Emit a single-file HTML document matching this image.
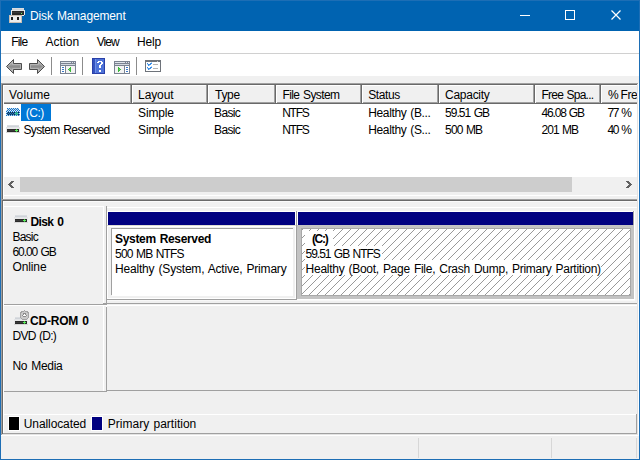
<!DOCTYPE html>
<html><head><meta charset="utf-8">
<style>
*{margin:0;padding:0;box-sizing:border-box}
html,body{width:640px;height:460px;overflow:hidden;background:#f0f0f0}
body{position:relative;font-family:"Liberation Sans",sans-serif;font-size:12px;color:#000}
.a{position:absolute}
.t{position:absolute;line-height:12px;white-space:nowrap;word-spacing:1px}
.b{font-weight:bold}
</style></head><body>
<div class="a" style="left:0px;top:0px;width:640px;height:460px;background:#1d6eb5;"></div>
<div class="a" style="left:1px;top:1px;width:638px;height:30px;background:#0063b1;"></div>
<div class="a" style="left:1px;top:31px;width:638px;height:428px;background:#f0f0f0;"></div>
<div id="x0" class="t" style="left:30.0px;top:10px;letter-spacing:-0.142px;color:#fff">Disk Management</div>
<svg class="a" style="left:9px;top:8px" width="16" height="15" shape-rendering="crispEdges"><rect x="3" y="0" width="12" height="1" fill="#dadde1"/><rect x="3" y="1" width="12" height="1" fill="#cfd3d8"/><rect x="2" y="2" width="14" height="1" fill="#e2e4e7"/><rect x="2" y="3" width="1" height="1" fill="#e9e9e9"/><rect x="3" y="3" width="12" height="1" fill="#2a2a2a"/><rect x="15" y="3" width="1" height="1" fill="#e9e9e9"/><rect x="2" y="4" width="1" height="1" fill="#e9e9e9"/><rect x="3" y="4" width="11" height="1" fill="#3a3a3a"/><rect x="14" y="4" width="1" height="1" fill="#2a2a2a"/><rect x="15" y="4" width="1" height="1" fill="#e9e9e9"/><rect x="2" y="5" width="1" height="1" fill="#e9e9e9"/><rect x="3" y="5" width="9" height="1" fill="#2a2a2a"/><rect x="12" y="5" width="1" height="1" fill="#5ff05f"/><rect x="13" y="5" width="2" height="1" fill="#2a2a2a"/><rect x="15" y="5" width="1" height="1" fill="#e9e9e9"/><rect x="2" y="6" width="1" height="1" fill="#e9e9e9"/><rect x="3" y="6" width="12" height="1" fill="#2a2a2a"/><rect x="15" y="6" width="1" height="1" fill="#e9e9e9"/><rect x="0" y="7" width="13" height="1" fill="#c8beb4"/><rect x="13" y="7" width="2" height="1" fill="#e9e9e9"/><rect x="0" y="8" width="1" height="1" fill="#c8beb4"/><rect x="1" y="8" width="11" height="1" fill="#ececec"/><rect x="12" y="8" width="1" height="1" fill="#c8beb4"/><rect x="0" y="9" width="1" height="1" fill="#c8beb4"/><rect x="1" y="9" width="1" height="1" fill="#ececec"/><rect x="2" y="9" width="2" height="1" fill="#1e1e1e"/><rect x="4" y="9" width="4" height="1" fill="#ececec"/><rect x="8" y="9" width="2" height="1" fill="#1e1e1e"/><rect x="10" y="9" width="2" height="1" fill="#ececec"/><rect x="12" y="9" width="1" height="1" fill="#c8beb4"/><rect x="0" y="10" width="1" height="1" fill="#c8beb4"/><rect x="1" y="10" width="1" height="1" fill="#ececec"/><rect x="2" y="10" width="2" height="1" fill="#1e1e1e"/><rect x="4" y="10" width="4" height="1" fill="#ececec"/><rect x="8" y="10" width="2" height="1" fill="#1e1e1e"/><rect x="10" y="10" width="2" height="1" fill="#ececec"/><rect x="12" y="10" width="1" height="1" fill="#c8beb4"/><rect x="0" y="11" width="1" height="1" fill="#c8beb4"/><rect x="1" y="11" width="1" height="1" fill="#ececec"/><rect x="2" y="11" width="2" height="1" fill="#1e1e1e"/><rect x="4" y="11" width="4" height="1" fill="#ececec"/><rect x="8" y="11" width="2" height="1" fill="#1e1e1e"/><rect x="10" y="11" width="2" height="1" fill="#ececec"/><rect x="12" y="11" width="1" height="1" fill="#c8beb4"/><rect x="0" y="12" width="1" height="1" fill="#c8beb4"/><rect x="1" y="12" width="11" height="1" fill="#ececec"/><rect x="12" y="12" width="1" height="1" fill="#c8beb4"/><rect x="0" y="13" width="1" height="1" fill="#c8beb4"/><rect x="1" y="13" width="11" height="1" fill="#ececec"/><rect x="12" y="13" width="1" height="1" fill="#c8beb4"/><rect x="0" y="14" width="13" height="1" fill="#c8beb4"/></svg>
<div class="a" style="left:520px;top:15px;width:10px;height:1px;background:#fff;"></div>
<div class="a" style="left:565px;top:10px;width:10px;height:10px;border:1px solid #fff"></div>
<svg class="a" style="left:611px;top:10px" width="10" height="10"><path d="M0.5 0.5L9.5 9.5M9.5 0.5L0.5 9.5" stroke="#fff" stroke-width="1.2"/></svg>
<div class="a" style="left:1px;top:31px;width:638px;height:22px;background:#fff;"></div>
<div id="x1" class="t" style="left:11.2px;top:36px;letter-spacing:-0.800px;">File</div>
<div id="x2" class="t" style="left:45.400000000000006px;top:36px;letter-spacing:0.080px;">Action</div>
<div id="x3" class="t" style="left:96.69999999999999px;top:36px;letter-spacing:-0.934px;">View</div>
<div id="x4" class="t" style="left:137.10000000000002px;top:36px;letter-spacing:-0.199px;">Help</div>
<div class="a" style="left:1px;top:53px;width:638px;height:1px;background:#d0d0d0;"></div>
<div class="a" style="left:1px;top:54px;width:638px;height:22px;background:#fff;"></div>
<svg class="a" style="left:4px;top:56px" width="44" height="20" viewBox="0 0 44 20">
<defs><linearGradient id="ga" x1="0" y1="0" x2="0" y2="1"><stop offset="0" stop-color="#c4c4c4"/><stop offset="0.5" stop-color="#8e8e8e"/><stop offset="1" stop-color="#b4b4b4"/></linearGradient></defs>
<path d="M2.5 10.5L9.5 3.5v4h8v6h-8v4z" fill="url(#ga)" stroke="#4e4e4e" stroke-width="1"/>
<path d="M4 10.5L8.5 6v2.5h8v4h-8V15z" fill="none" stroke="#c8c8c8" stroke-width="0.8" opacity="0.7"/>
<path d="M40.5 10.5L33.5 3.5v4h-8v6h8v4z" fill="url(#ga)" stroke="#4e4e4e" stroke-width="1"/>
<path d="M39 10.5L34.5 6v2.5h-8v4h8V15z" fill="none" stroke="#c8c8c8" stroke-width="0.8" opacity="0.7"/>
</svg>
<div class="a" style="left:51px;top:57px;width:1px;height:18px;background:#8c8c8c;"></div>
<div class="a" style="left:82px;top:57px;width:1px;height:18px;background:#8c8c8c;"></div>
<div class="a" style="left:136px;top:57px;width:1px;height:18px;background:#8c8c8c;"></div>
<svg class="a" style="left:60px;top:61px" width="16" height="13" shape-rendering="crispEdges"><rect x="0" y="0" width="16" height="1" fill="#7b8391"/><rect x="0" y="1" width="1" height="1" fill="#7b8391"/><rect x="1" y="1" width="10" height="1" fill="#dfe3ea"/><rect x="11" y="1" width="1" height="1" fill="#7b8391"/><rect x="12" y="1" width="1" height="1" fill="#dfe3ea"/><rect x="13" y="1" width="1" height="1" fill="#7b8391"/><rect x="14" y="1" width="1" height="1" fill="#dfe3ea"/><rect x="15" y="1" width="1" height="1" fill="#7b8391"/><rect x="0" y="2" width="16" height="1" fill="#7b8391"/><rect x="0" y="3" width="1" height="1" fill="#7b8391"/><rect x="1" y="3" width="14" height="1" fill="#d3d8e0"/><rect x="15" y="3" width="1" height="1" fill="#7b8391"/><rect x="0" y="4" width="16" height="1" fill="#7b8391"/><rect x="0" y="5" width="1" height="1" fill="#7b8391"/><rect x="1" y="5" width="4" height="1" fill="#ffffff"/><rect x="5" y="5" width="1" height="1" fill="#7b8391"/><rect x="6" y="5" width="9" height="1" fill="#f3f3f3"/><rect x="15" y="5" width="1" height="1" fill="#7b8391"/><rect x="0" y="6" width="1" height="1" fill="#7b8391"/><rect x="1" y="6" width="1" height="1" fill="#ffffff"/><rect x="2" y="6" width="2" height="1" fill="#3a78c8"/><rect x="4" y="6" width="1" height="1" fill="#ffffff"/><rect x="5" y="6" width="1" height="1" fill="#7b8391"/><rect x="6" y="6" width="4" height="1" fill="#f3f3f3"/><rect x="10" y="6" width="1" height="1" fill="#3cb93c"/><rect x="11" y="6" width="4" height="1" fill="#f3f3f3"/><rect x="15" y="6" width="1" height="1" fill="#7b8391"/><rect x="0" y="7" width="1" height="1" fill="#7b8391"/><rect x="1" y="7" width="4" height="1" fill="#ffffff"/><rect x="5" y="7" width="1" height="1" fill="#7b8391"/><rect x="6" y="7" width="3" height="1" fill="#f3f3f3"/><rect x="9" y="7" width="2" height="1" fill="#3cb93c"/><rect x="11" y="7" width="4" height="1" fill="#f3f3f3"/><rect x="15" y="7" width="1" height="1" fill="#7b8391"/><rect x="0" y="8" width="1" height="1" fill="#7b8391"/><rect x="1" y="8" width="1" height="1" fill="#ffffff"/><rect x="2" y="8" width="2" height="1" fill="#3a78c8"/><rect x="4" y="8" width="1" height="1" fill="#ffffff"/><rect x="5" y="8" width="1" height="1" fill="#7b8391"/><rect x="6" y="8" width="2" height="1" fill="#f3f3f3"/><rect x="8" y="8" width="1" height="1" fill="#3cb93c"/><rect x="9" y="8" width="1" height="1" fill="#66dd66"/><rect x="10" y="8" width="1" height="1" fill="#3cb93c"/><rect x="11" y="8" width="4" height="1" fill="#f3f3f3"/><rect x="15" y="8" width="1" height="1" fill="#7b8391"/><rect x="0" y="9" width="1" height="1" fill="#7b8391"/><rect x="1" y="9" width="4" height="1" fill="#ffffff"/><rect x="5" y="9" width="1" height="1" fill="#7b8391"/><rect x="6" y="9" width="3" height="1" fill="#f3f3f3"/><rect x="9" y="9" width="2" height="1" fill="#3cb93c"/><rect x="11" y="9" width="4" height="1" fill="#f3f3f3"/><rect x="15" y="9" width="1" height="1" fill="#7b8391"/><rect x="0" y="10" width="1" height="1" fill="#7b8391"/><rect x="1" y="10" width="1" height="1" fill="#ffffff"/><rect x="2" y="10" width="2" height="1" fill="#3a78c8"/><rect x="4" y="10" width="1" height="1" fill="#ffffff"/><rect x="5" y="10" width="1" height="1" fill="#7b8391"/><rect x="6" y="10" width="4" height="1" fill="#f3f3f3"/><rect x="10" y="10" width="1" height="1" fill="#3cb93c"/><rect x="11" y="10" width="4" height="1" fill="#f3f3f3"/><rect x="15" y="10" width="1" height="1" fill="#7b8391"/><rect x="0" y="11" width="1" height="1" fill="#7b8391"/><rect x="1" y="11" width="4" height="1" fill="#ffffff"/><rect x="5" y="11" width="1" height="1" fill="#7b8391"/><rect x="6" y="11" width="9" height="1" fill="#f3f3f3"/><rect x="15" y="11" width="1" height="1" fill="#7b8391"/><rect x="0" y="12" width="16" height="1" fill="#7b8391"/></svg>
<svg class="a" style="left:92px;top:58px" width="13" height="16" shape-rendering="crispEdges"><rect x="0" y="0" width="13" height="1" fill="#2a40a8"/><rect x="0" y="1" width="1" height="1" fill="#2a40a8"/><rect x="1" y="1" width="2" height="1" fill="#3553c0"/><rect x="3" y="1" width="1" height="1" fill="#6d8fe6"/><rect x="4" y="1" width="8" height="1" fill="#4d72d8"/><rect x="12" y="1" width="1" height="1" fill="#2a40a8"/><rect x="0" y="2" width="1" height="1" fill="#2a40a8"/><rect x="1" y="2" width="2" height="1" fill="#3553c0"/><rect x="3" y="2" width="1" height="1" fill="#6d8fe6"/><rect x="4" y="2" width="8" height="1" fill="#4d72d8"/><rect x="12" y="2" width="1" height="1" fill="#2a40a8"/><rect x="0" y="3" width="1" height="1" fill="#2a40a8"/><rect x="1" y="3" width="2" height="1" fill="#3553c0"/><rect x="3" y="3" width="1" height="1" fill="#6d8fe6"/><rect x="4" y="3" width="2" height="1" fill="#4d72d8"/><rect x="6" y="3" width="4" height="1" fill="#ffffff"/><rect x="10" y="3" width="2" height="1" fill="#4d72d8"/><rect x="12" y="3" width="1" height="1" fill="#2a40a8"/><rect x="0" y="4" width="1" height="1" fill="#2a40a8"/><rect x="1" y="4" width="2" height="1" fill="#3553c0"/><rect x="3" y="4" width="1" height="1" fill="#6d8fe6"/><rect x="4" y="4" width="1" height="1" fill="#4d72d8"/><rect x="5" y="4" width="2" height="1" fill="#ffffff"/><rect x="7" y="4" width="2" height="1" fill="#4d72d8"/><rect x="9" y="4" width="2" height="1" fill="#ffffff"/><rect x="11" y="4" width="1" height="1" fill="#4d72d8"/><rect x="12" y="4" width="1" height="1" fill="#2a40a8"/><rect x="0" y="5" width="1" height="1" fill="#2a40a8"/><rect x="1" y="5" width="2" height="1" fill="#3553c0"/><rect x="3" y="5" width="1" height="1" fill="#6d8fe6"/><rect x="4" y="5" width="5" height="1" fill="#4d72d8"/><rect x="9" y="5" width="2" height="1" fill="#ffffff"/><rect x="11" y="5" width="1" height="1" fill="#4d72d8"/><rect x="12" y="5" width="1" height="1" fill="#2a40a8"/><rect x="0" y="6" width="1" height="1" fill="#2a40a8"/><rect x="1" y="6" width="2" height="1" fill="#3553c0"/><rect x="3" y="6" width="1" height="1" fill="#6d8fe6"/><rect x="4" y="6" width="4" height="1" fill="#4d72d8"/><rect x="8" y="6" width="2" height="1" fill="#ffffff"/><rect x="10" y="6" width="2" height="1" fill="#4d72d8"/><rect x="12" y="6" width="1" height="1" fill="#2a40a8"/><rect x="0" y="7" width="1" height="1" fill="#2a40a8"/><rect x="1" y="7" width="2" height="1" fill="#3553c0"/><rect x="3" y="7" width="1" height="1" fill="#6d8fe6"/><rect x="4" y="7" width="3" height="1" fill="#4d72d8"/><rect x="7" y="7" width="2" height="1" fill="#ffffff"/><rect x="9" y="7" width="3" height="1" fill="#4d72d8"/><rect x="12" y="7" width="1" height="1" fill="#2a40a8"/><rect x="0" y="8" width="1" height="1" fill="#2a40a8"/><rect x="1" y="8" width="2" height="1" fill="#3553c0"/><rect x="3" y="8" width="1" height="1" fill="#6d8fe6"/><rect x="4" y="8" width="3" height="1" fill="#4d72d8"/><rect x="7" y="8" width="2" height="1" fill="#ffffff"/><rect x="9" y="8" width="3" height="1" fill="#4d72d8"/><rect x="12" y="8" width="1" height="1" fill="#2a40a8"/><rect x="0" y="9" width="1" height="1" fill="#2a40a8"/><rect x="1" y="9" width="2" height="1" fill="#3553c0"/><rect x="3" y="9" width="1" height="1" fill="#6d8fe6"/><rect x="4" y="9" width="3" height="1" fill="#4d72d8"/><rect x="7" y="9" width="2" height="1" fill="#ffffff"/><rect x="9" y="9" width="3" height="1" fill="#4d72d8"/><rect x="12" y="9" width="1" height="1" fill="#2a40a8"/><rect x="0" y="10" width="1" height="1" fill="#2a40a8"/><rect x="1" y="10" width="2" height="1" fill="#3553c0"/><rect x="3" y="10" width="1" height="1" fill="#6d8fe6"/><rect x="4" y="10" width="8" height="1" fill="#4d72d8"/><rect x="12" y="10" width="1" height="1" fill="#2a40a8"/><rect x="0" y="11" width="1" height="1" fill="#2a40a8"/><rect x="1" y="11" width="2" height="1" fill="#3553c0"/><rect x="3" y="11" width="1" height="1" fill="#6d8fe6"/><rect x="4" y="11" width="8" height="1" fill="#4d72d8"/><rect x="12" y="11" width="1" height="1" fill="#2a40a8"/><rect x="0" y="12" width="1" height="1" fill="#2a40a8"/><rect x="1" y="12" width="2" height="1" fill="#3553c0"/><rect x="3" y="12" width="1" height="1" fill="#6d8fe6"/><rect x="4" y="12" width="3" height="1" fill="#4d72d8"/><rect x="7" y="12" width="2" height="1" fill="#ffffff"/><rect x="9" y="12" width="3" height="1" fill="#4d72d8"/><rect x="12" y="12" width="1" height="1" fill="#2a40a8"/><rect x="0" y="13" width="1" height="1" fill="#2a40a8"/><rect x="1" y="13" width="2" height="1" fill="#3553c0"/><rect x="3" y="13" width="1" height="1" fill="#6d8fe6"/><rect x="4" y="13" width="3" height="1" fill="#4d72d8"/><rect x="7" y="13" width="2" height="1" fill="#ffffff"/><rect x="9" y="13" width="3" height="1" fill="#4d72d8"/><rect x="12" y="13" width="1" height="1" fill="#2a40a8"/><rect x="0" y="14" width="1" height="1" fill="#2a40a8"/><rect x="1" y="14" width="2" height="1" fill="#3553c0"/><rect x="3" y="14" width="1" height="1" fill="#6d8fe6"/><rect x="4" y="14" width="8" height="1" fill="#4d72d8"/><rect x="12" y="14" width="1" height="1" fill="#2a40a8"/><rect x="0" y="15" width="13" height="1" fill="#2a40a8"/></svg>
<svg class="a" style="left:114px;top:61px" width="16" height="13" shape-rendering="crispEdges"><rect x="0" y="0" width="16" height="1" fill="#7b8391"/><rect x="0" y="1" width="1" height="1" fill="#7b8391"/><rect x="1" y="1" width="10" height="1" fill="#dfe3ea"/><rect x="11" y="1" width="1" height="1" fill="#7b8391"/><rect x="12" y="1" width="1" height="1" fill="#dfe3ea"/><rect x="13" y="1" width="1" height="1" fill="#7b8391"/><rect x="14" y="1" width="1" height="1" fill="#dfe3ea"/><rect x="15" y="1" width="1" height="1" fill="#7b8391"/><rect x="0" y="2" width="16" height="1" fill="#7b8391"/><rect x="0" y="3" width="1" height="1" fill="#7b8391"/><rect x="1" y="3" width="14" height="1" fill="#d3d8e0"/><rect x="15" y="3" width="1" height="1" fill="#7b8391"/><rect x="0" y="4" width="16" height="1" fill="#7b8391"/><rect x="0" y="5" width="1" height="1" fill="#7b8391"/><rect x="1" y="5" width="9" height="1" fill="#f3f3f3"/><rect x="10" y="5" width="1" height="1" fill="#7b8391"/><rect x="11" y="5" width="4" height="1" fill="#ffffff"/><rect x="15" y="5" width="1" height="1" fill="#7b8391"/><rect x="0" y="6" width="1" height="1" fill="#7b8391"/><rect x="1" y="6" width="3" height="1" fill="#f3f3f3"/><rect x="4" y="6" width="1" height="1" fill="#3cb93c"/><rect x="5" y="6" width="5" height="1" fill="#f3f3f3"/><rect x="10" y="6" width="1" height="1" fill="#7b8391"/><rect x="11" y="6" width="1" height="1" fill="#ffffff"/><rect x="12" y="6" width="2" height="1" fill="#3a78c8"/><rect x="14" y="6" width="1" height="1" fill="#ffffff"/><rect x="15" y="6" width="1" height="1" fill="#7b8391"/><rect x="0" y="7" width="1" height="1" fill="#7b8391"/><rect x="1" y="7" width="3" height="1" fill="#f3f3f3"/><rect x="4" y="7" width="2" height="1" fill="#3cb93c"/><rect x="6" y="7" width="4" height="1" fill="#f3f3f3"/><rect x="10" y="7" width="1" height="1" fill="#7b8391"/><rect x="11" y="7" width="4" height="1" fill="#ffffff"/><rect x="15" y="7" width="1" height="1" fill="#7b8391"/><rect x="0" y="8" width="1" height="1" fill="#7b8391"/><rect x="1" y="8" width="3" height="1" fill="#f3f3f3"/><rect x="4" y="8" width="1" height="1" fill="#3cb93c"/><rect x="5" y="8" width="1" height="1" fill="#66dd66"/><rect x="6" y="8" width="1" height="1" fill="#3cb93c"/><rect x="7" y="8" width="3" height="1" fill="#f3f3f3"/><rect x="10" y="8" width="1" height="1" fill="#7b8391"/><rect x="11" y="8" width="1" height="1" fill="#ffffff"/><rect x="12" y="8" width="2" height="1" fill="#3a78c8"/><rect x="14" y="8" width="1" height="1" fill="#ffffff"/><rect x="15" y="8" width="1" height="1" fill="#7b8391"/><rect x="0" y="9" width="1" height="1" fill="#7b8391"/><rect x="1" y="9" width="3" height="1" fill="#f3f3f3"/><rect x="4" y="9" width="2" height="1" fill="#3cb93c"/><rect x="6" y="9" width="4" height="1" fill="#f3f3f3"/><rect x="10" y="9" width="1" height="1" fill="#7b8391"/><rect x="11" y="9" width="4" height="1" fill="#ffffff"/><rect x="15" y="9" width="1" height="1" fill="#7b8391"/><rect x="0" y="10" width="1" height="1" fill="#7b8391"/><rect x="1" y="10" width="3" height="1" fill="#f3f3f3"/><rect x="4" y="10" width="1" height="1" fill="#3cb93c"/><rect x="5" y="10" width="5" height="1" fill="#f3f3f3"/><rect x="10" y="10" width="1" height="1" fill="#7b8391"/><rect x="11" y="10" width="1" height="1" fill="#ffffff"/><rect x="12" y="10" width="2" height="1" fill="#3a78c8"/><rect x="14" y="10" width="1" height="1" fill="#ffffff"/><rect x="15" y="10" width="1" height="1" fill="#7b8391"/><rect x="0" y="11" width="1" height="1" fill="#7b8391"/><rect x="1" y="11" width="9" height="1" fill="#f3f3f3"/><rect x="10" y="11" width="1" height="1" fill="#7b8391"/><rect x="11" y="11" width="4" height="1" fill="#ffffff"/><rect x="15" y="11" width="1" height="1" fill="#7b8391"/><rect x="0" y="12" width="16" height="1" fill="#7b8391"/></svg>
<svg class="a" style="left:145px;top:60px" width="16" height="12" shape-rendering="crispEdges"><rect x="0" y="0" width="16" height="1" fill="#6e737a"/><rect x="0" y="1" width="12" height="1" fill="#6e737a"/><rect x="12" y="1" width="1" height="1" fill="#c8c8c8"/><rect x="13" y="1" width="3" height="1" fill="#6e737a"/><rect x="0" y="2" width="1" height="1" fill="#6e737a"/><rect x="1" y="2" width="5" height="1" fill="#ffffff"/><rect x="6" y="2" width="1" height="1" fill="#a8d0f6"/><rect x="7" y="2" width="8" height="1" fill="#ffffff"/><rect x="15" y="2" width="1" height="1" fill="#6e737a"/><rect x="0" y="3" width="1" height="1" fill="#6e737a"/><rect x="1" y="3" width="1" height="1" fill="#ffffff"/><rect x="2" y="3" width="1" height="1" fill="#3a8ee8"/><rect x="3" y="3" width="2" height="1" fill="#ffffff"/><rect x="5" y="3" width="2" height="1" fill="#3a8ee8"/><rect x="7" y="3" width="8" height="1" fill="#ffffff"/><rect x="15" y="3" width="1" height="1" fill="#6e737a"/><rect x="0" y="4" width="1" height="1" fill="#6e737a"/><rect x="1" y="4" width="1" height="1" fill="#ffffff"/><rect x="2" y="4" width="1" height="1" fill="#a8d0f6"/><rect x="3" y="4" width="3" height="1" fill="#3a8ee8"/><rect x="6" y="4" width="2" height="1" fill="#ffffff"/><rect x="8" y="4" width="5" height="1" fill="#b4b4b4"/><rect x="13" y="4" width="2" height="1" fill="#ffffff"/><rect x="15" y="4" width="1" height="1" fill="#6e737a"/><rect x="0" y="5" width="1" height="1" fill="#6e737a"/><rect x="1" y="5" width="2" height="1" fill="#ffffff"/><rect x="3" y="5" width="1" height="1" fill="#3a8ee8"/><rect x="4" y="5" width="1" height="1" fill="#a8d0f6"/><rect x="5" y="5" width="10" height="1" fill="#ffffff"/><rect x="15" y="5" width="1" height="1" fill="#6e737a"/><rect x="0" y="6" width="1" height="1" fill="#6e737a"/><rect x="1" y="6" width="5" height="1" fill="#ffffff"/><rect x="6" y="6" width="1" height="1" fill="#a8d0f6"/><rect x="7" y="6" width="8" height="1" fill="#ffffff"/><rect x="15" y="6" width="1" height="1" fill="#6e737a"/><rect x="0" y="7" width="1" height="1" fill="#6e737a"/><rect x="1" y="7" width="1" height="1" fill="#ffffff"/><rect x="2" y="7" width="1" height="1" fill="#3a8ee8"/><rect x="3" y="7" width="2" height="1" fill="#ffffff"/><rect x="5" y="7" width="2" height="1" fill="#3a8ee8"/><rect x="7" y="7" width="8" height="1" fill="#ffffff"/><rect x="15" y="7" width="1" height="1" fill="#6e737a"/><rect x="0" y="8" width="1" height="1" fill="#6e737a"/><rect x="1" y="8" width="1" height="1" fill="#ffffff"/><rect x="2" y="8" width="1" height="1" fill="#a8d0f6"/><rect x="3" y="8" width="3" height="1" fill="#3a8ee8"/><rect x="6" y="8" width="2" height="1" fill="#ffffff"/><rect x="8" y="8" width="5" height="1" fill="#b4b4b4"/><rect x="13" y="8" width="2" height="1" fill="#ffffff"/><rect x="15" y="8" width="1" height="1" fill="#6e737a"/><rect x="0" y="9" width="1" height="1" fill="#6e737a"/><rect x="1" y="9" width="2" height="1" fill="#ffffff"/><rect x="3" y="9" width="1" height="1" fill="#3a8ee8"/><rect x="4" y="9" width="1" height="1" fill="#a8d0f6"/><rect x="5" y="9" width="10" height="1" fill="#ffffff"/><rect x="15" y="9" width="1" height="1" fill="#6e737a"/><rect x="0" y="10" width="1" height="1" fill="#6e737a"/><rect x="1" y="10" width="14" height="1" fill="#ffffff"/><rect x="15" y="10" width="1" height="1" fill="#6e737a"/><rect x="0" y="11" width="16" height="1" fill="#6e737a"/></svg>
<div class="a" style="left:1px;top:83px;width:638px;height:1px;background:#a0a0a0;"></div>
<div class="a" style="left:1px;top:83px;width:1px;height:113px;background:#a0a0a0;"></div>
<div class="a" style="left:2px;top:84px;width:636px;height:1px;background:#696969;"></div>
<div class="a" style="left:2px;top:84px;width:1px;height:111px;background:#696969;"></div>
<div class="a" style="left:3px;top:85px;width:634px;height:109px;background:#fff;"></div>
<div class="a" style="left:3px;top:85px;width:634px;height:19px;background:#f0f0f0;"></div>
<div class="a" style="left:3px;top:85px;width:634px;height:1px;background:#fff;"></div>
<div class="a" style="left:3px;top:102px;width:634px;height:1px;background:#a0a0a0;"></div>
<div class="a" style="left:3px;top:103px;width:634px;height:1px;background:#696969;"></div>
<div class="a" style="left:130px;top:85px;width:1px;height:18px;background:#a0a0a0;"></div>
<div class="a" style="left:131px;top:85px;width:1px;height:19px;background:#696969;"></div>
<div class="a" style="left:132px;top:85px;width:1px;height:18px;background:#fff;"></div>
<div class="a" style="left:206px;top:85px;width:1px;height:18px;background:#a0a0a0;"></div>
<div class="a" style="left:207px;top:85px;width:1px;height:19px;background:#696969;"></div>
<div class="a" style="left:208px;top:85px;width:1px;height:18px;background:#fff;"></div>
<div class="a" style="left:274px;top:85px;width:1px;height:18px;background:#a0a0a0;"></div>
<div class="a" style="left:275px;top:85px;width:1px;height:19px;background:#696969;"></div>
<div class="a" style="left:276px;top:85px;width:1px;height:18px;background:#fff;"></div>
<div class="a" style="left:360px;top:85px;width:1px;height:18px;background:#a0a0a0;"></div>
<div class="a" style="left:361px;top:85px;width:1px;height:19px;background:#696969;"></div>
<div class="a" style="left:362px;top:85px;width:1px;height:18px;background:#fff;"></div>
<div class="a" style="left:437px;top:85px;width:1px;height:18px;background:#a0a0a0;"></div>
<div class="a" style="left:438px;top:85px;width:1px;height:19px;background:#696969;"></div>
<div class="a" style="left:439px;top:85px;width:1px;height:18px;background:#fff;"></div>
<div class="a" style="left:533px;top:85px;width:1px;height:18px;background:#a0a0a0;"></div>
<div class="a" style="left:534px;top:85px;width:1px;height:19px;background:#696969;"></div>
<div class="a" style="left:535px;top:85px;width:1px;height:18px;background:#fff;"></div>
<div class="a" style="left:599px;top:85px;width:1px;height:18px;background:#a0a0a0;"></div>
<div class="a" style="left:600px;top:85px;width:1px;height:19px;background:#696969;"></div>
<div class="a" style="left:601px;top:85px;width:1px;height:18px;background:#fff;"></div>
<div class="a" style="left:3px;top:85px;width:1px;height:18px;background:#fff;"></div>
<div id="x5" class="t" style="left:9.0px;top:89px;letter-spacing:0.200px;">Volume</div>
<div id="x6" class="t" style="left:138.10000000000002px;top:89px;letter-spacing:-0.120px;">Layout</div>
<div id="x7" class="t" style="left:215.10000000000002px;top:89px;letter-spacing:-0.333px;">Type</div>
<div id="x8" class="t" style="left:282.5px;top:89px;letter-spacing:-0.620px;">File System</div>
<div id="x9" class="t" style="left:368.25px;top:89px;letter-spacing:-0.400px;">Status</div>
<div id="x10" class="t" style="left:445.1px;top:89px;letter-spacing:-0.286px;">Capacity</div>
<div id="x11" class="t" style="left:541.5px;top:89px;letter-spacing:-0.780px;">Free Spa...</div>
<div id="x12" class="t" style="left:607.9000000000001px;top:89px;width:29px;overflow:hidden;word-spacing:-0.5px;letter-spacing:-0.4px;">% Fre</div>
<div class="a" style="left:21px;top:104px;width:30px;height:17px;background:#0078d7;"></div>
<div id="x13" class="t" style="left:25.75px;top:107px;letter-spacing:-0.501px;color:#fff">(C:)</div>
<div id="x14" class="t" style="left:23.5px;top:124px;letter-spacing:-0.643px;">System Reserved</div>
<div id="x15" class="t" style="left:138.10000000000002px;top:107px;letter-spacing:-0.160px;">Simple</div>
<div id="x16" class="t" style="left:138.10000000000002px;top:124px;letter-spacing:-0.160px;">Simple</div>
<div id="x17" class="t" style="left:214.10000000000002px;top:107px;letter-spacing:-0.650px;">Basic</div>
<div id="x18" class="t" style="left:214.10000000000002px;top:124px;letter-spacing:-0.650px;">Basic</div>
<div id="x19" class="t" style="left:282.20000000000005px;top:107px;letter-spacing:-1.267px;">NTFS</div>
<div id="x20" class="t" style="left:282.20000000000005px;top:124px;letter-spacing:-1.267px;">NTFS</div>
<div id="x21" class="t" style="left:368.25px;top:107px;letter-spacing:-0.374px;">Healthy (B...</div>
<div id="x22" class="t" style="left:368.25px;top:124px;letter-spacing:-0.374px;">Healthy (S...</div>
<div id="x23" class="t" style="left:445.1px;top:107px;letter-spacing:-0.972px;">59.51 GB</div>
<div id="x24" class="t" style="left:445.1px;top:124px;letter-spacing:-0.880px;">500 MB</div>
<div id="x25" class="t" style="left:541.5px;top:107px;letter-spacing:-1.173px;">46.08 GB</div>
<div id="x26" class="t" style="left:541.5px;top:124px;letter-spacing:-0.960px;">201 MB</div>
<div id="x27" class="t" style="left:607.5px;top:107px;letter-spacing:-1.334px;">77 %</div>
<div id="x28" class="t" style="left:607.5px;top:124px;letter-spacing:-1.334px;">40 %</div>
<svg class="a" style="left:6px;top:108px" width="14" height="8" shape-rendering="crispEdges"><rect x="1" y="0" width="1" height="1" fill="#0a78d8"/><rect x="2" y="0" width="1" height="1" fill="#dadde1"/><rect x="3" y="0" width="1" height="1" fill="#0a78d8"/><rect x="4" y="0" width="1" height="1" fill="#dadde1"/><rect x="5" y="0" width="1" height="1" fill="#0a78d8"/><rect x="6" y="0" width="1" height="1" fill="#dadde1"/><rect x="7" y="0" width="1" height="1" fill="#0a78d8"/><rect x="8" y="0" width="1" height="1" fill="#dadde1"/><rect x="9" y="0" width="1" height="1" fill="#0a78d8"/><rect x="10" y="0" width="1" height="1" fill="#dadde1"/><rect x="11" y="0" width="1" height="1" fill="#0a78d8"/><rect x="12" y="0" width="1" height="1" fill="#dadde1"/><rect x="1" y="1" width="1" height="1" fill="#cfd3d8"/><rect x="2" y="1" width="1" height="1" fill="#0a78d8"/><rect x="3" y="1" width="1" height="1" fill="#cfd3d8"/><rect x="4" y="1" width="1" height="1" fill="#0a78d8"/><rect x="5" y="1" width="1" height="1" fill="#cfd3d8"/><rect x="6" y="1" width="1" height="1" fill="#0a78d8"/><rect x="7" y="1" width="1" height="1" fill="#cfd3d8"/><rect x="8" y="1" width="1" height="1" fill="#0a78d8"/><rect x="9" y="1" width="1" height="1" fill="#cfd3d8"/><rect x="10" y="1" width="1" height="1" fill="#0a78d8"/><rect x="11" y="1" width="1" height="1" fill="#cfd3d8"/><rect x="12" y="1" width="1" height="1" fill="#0a78d8"/><rect x="0" y="2" width="1" height="1" fill="#e2e4e7"/><rect x="1" y="2" width="1" height="1" fill="#0a78d8"/><rect x="2" y="2" width="1" height="1" fill="#e2e4e7"/><rect x="3" y="2" width="1" height="1" fill="#0a78d8"/><rect x="4" y="2" width="1" height="1" fill="#e2e4e7"/><rect x="5" y="2" width="1" height="1" fill="#0a78d8"/><rect x="6" y="2" width="1" height="1" fill="#e2e4e7"/><rect x="7" y="2" width="1" height="1" fill="#0a78d8"/><rect x="8" y="2" width="1" height="1" fill="#e2e4e7"/><rect x="9" y="2" width="1" height="1" fill="#0a78d8"/><rect x="10" y="2" width="1" height="1" fill="#e2e4e7"/><rect x="11" y="2" width="1" height="1" fill="#0a78d8"/><rect x="12" y="2" width="1" height="1" fill="#e2e4e7"/><rect x="13" y="2" width="1" height="1" fill="#0a78d8"/><rect x="0" y="3" width="1" height="1" fill="#0a78d8"/><rect x="1" y="3" width="1" height="1" fill="#e9e9e9"/><rect x="2" y="3" width="1" height="1" fill="#0a78d8"/><rect x="3" y="3" width="1" height="1" fill="#e9e9e9"/><rect x="4" y="3" width="1" height="1" fill="#0a78d8"/><rect x="5" y="3" width="1" height="1" fill="#e9e9e9"/><rect x="6" y="3" width="1" height="1" fill="#0a78d8"/><rect x="7" y="3" width="1" height="1" fill="#e9e9e9"/><rect x="8" y="3" width="1" height="1" fill="#0a78d8"/><rect x="9" y="3" width="1" height="1" fill="#e9e9e9"/><rect x="10" y="3" width="1" height="1" fill="#0a78d8"/><rect x="11" y="3" width="1" height="1" fill="#e9e9e9"/><rect x="12" y="3" width="1" height="1" fill="#0a78d8"/><rect x="13" y="3" width="1" height="1" fill="#e9e9e9"/><rect x="0" y="4" width="1" height="1" fill="#e9e9e9"/><rect x="1" y="4" width="1" height="1" fill="#0a78d8"/><rect x="2" y="4" width="1" height="1" fill="#2a2a2a"/><rect x="3" y="4" width="1" height="1" fill="#0a78d8"/><rect x="4" y="4" width="1" height="1" fill="#2a2a2a"/><rect x="5" y="4" width="1" height="1" fill="#0a78d8"/><rect x="6" y="4" width="1" height="1" fill="#2a2a2a"/><rect x="7" y="4" width="1" height="1" fill="#0a78d8"/><rect x="8" y="4" width="1" height="1" fill="#2a2a2a"/><rect x="9" y="4" width="1" height="1" fill="#0a78d8"/><rect x="10" y="4" width="1" height="1" fill="#3fd23f"/><rect x="11" y="4" width="1" height="1" fill="#0a78d8"/><rect x="12" y="4" width="1" height="1" fill="#2a2a2a"/><rect x="13" y="4" width="1" height="1" fill="#0a78d8"/><rect x="0" y="5" width="1" height="1" fill="#0a78d8"/><rect x="1" y="5" width="1" height="1" fill="#3a3a3a"/><rect x="2" y="5" width="1" height="1" fill="#0a78d8"/><rect x="3" y="5" width="1" height="1" fill="#3a3a3a"/><rect x="4" y="5" width="1" height="1" fill="#0a78d8"/><rect x="5" y="5" width="1" height="1" fill="#3a3a3a"/><rect x="6" y="5" width="1" height="1" fill="#0a78d8"/><rect x="7" y="5" width="1" height="1" fill="#3a3a3a"/><rect x="8" y="5" width="1" height="1" fill="#0a78d8"/><rect x="9" y="5" width="1" height="1" fill="#5ff05f"/><rect x="10" y="5" width="1" height="1" fill="#0a78d8"/><rect x="11" y="5" width="1" height="1" fill="#5ff05f"/><rect x="12" y="5" width="1" height="1" fill="#0a78d8"/><rect x="13" y="5" width="1" height="1" fill="#e9e9e9"/><rect x="0" y="6" width="1" height="1" fill="#e9e9e9"/><rect x="1" y="6" width="1" height="1" fill="#0a78d8"/><rect x="2" y="6" width="1" height="1" fill="#2a2a2a"/><rect x="3" y="6" width="1" height="1" fill="#0a78d8"/><rect x="4" y="6" width="1" height="1" fill="#2a2a2a"/><rect x="5" y="6" width="1" height="1" fill="#0a78d8"/><rect x="6" y="6" width="1" height="1" fill="#2a2a2a"/><rect x="7" y="6" width="1" height="1" fill="#0a78d8"/><rect x="8" y="6" width="1" height="1" fill="#2a2a2a"/><rect x="9" y="6" width="1" height="1" fill="#0a78d8"/><rect x="10" y="6" width="1" height="1" fill="#3fd23f"/><rect x="11" y="6" width="1" height="1" fill="#0a78d8"/><rect x="12" y="6" width="1" height="1" fill="#2a2a2a"/><rect x="13" y="6" width="1" height="1" fill="#0a78d8"/><rect x="0" y="7" width="1" height="1" fill="#0a78d8"/><rect x="1" y="7" width="1" height="1" fill="#d6d6d6"/><rect x="2" y="7" width="1" height="1" fill="#0a78d8"/><rect x="3" y="7" width="1" height="1" fill="#d6d6d6"/><rect x="4" y="7" width="1" height="1" fill="#0a78d8"/><rect x="5" y="7" width="1" height="1" fill="#d6d6d6"/><rect x="6" y="7" width="1" height="1" fill="#0a78d8"/><rect x="7" y="7" width="1" height="1" fill="#d6d6d6"/><rect x="8" y="7" width="1" height="1" fill="#0a78d8"/><rect x="9" y="7" width="1" height="1" fill="#d6d6d6"/><rect x="10" y="7" width="1" height="1" fill="#0a78d8"/><rect x="11" y="7" width="1" height="1" fill="#d6d6d6"/><rect x="12" y="7" width="1" height="1" fill="#0a78d8"/><rect x="13" y="7" width="1" height="1" fill="#d6d6d6"/></svg>
<svg class="a" style="left:6px;top:125px" width="14" height="8" shape-rendering="crispEdges"><rect x="1" y="0" width="12" height="1" fill="#dadde1"/><rect x="1" y="1" width="12" height="1" fill="#cfd3d8"/><rect x="0" y="2" width="14" height="1" fill="#e2e4e7"/><rect x="0" y="3" width="14" height="1" fill="#e9e9e9"/><rect x="0" y="4" width="1" height="1" fill="#e9e9e9"/><rect x="1" y="4" width="9" height="1" fill="#2a2a2a"/><rect x="10" y="4" width="1" height="1" fill="#3fd23f"/><rect x="11" y="4" width="2" height="1" fill="#2a2a2a"/><rect x="13" y="4" width="1" height="1" fill="#e9e9e9"/><rect x="0" y="5" width="1" height="1" fill="#e9e9e9"/><rect x="1" y="5" width="8" height="1" fill="#3a3a3a"/><rect x="9" y="5" width="3" height="1" fill="#5ff05f"/><rect x="12" y="5" width="1" height="1" fill="#2a2a2a"/><rect x="13" y="5" width="1" height="1" fill="#e9e9e9"/><rect x="0" y="6" width="1" height="1" fill="#e9e9e9"/><rect x="1" y="6" width="9" height="1" fill="#2a2a2a"/><rect x="10" y="6" width="1" height="1" fill="#3fd23f"/><rect x="11" y="6" width="2" height="1" fill="#2a2a2a"/><rect x="13" y="6" width="1" height="1" fill="#e9e9e9"/><rect x="0" y="7" width="14" height="1" fill="#d6d6d6"/></svg>
<div class="a" style="left:3px;top:85px;width:1px;height:115px;background:#fff;"></div>
<div class="a" style="left:4px;top:177px;width:633px;height:17px;background:#f0f0f0;"></div>
<div class="a" style="left:20px;top:177px;width:552px;height:15px;background:#cdcdcd;"></div>
<svg class="a" style="left:8px;top:181px" width="6" height="7" shape-rendering="crispEdges"><rect x="3" y="0" width="3" height="1" fill="#606060"/><rect x="2" y="1" width="3" height="1" fill="#606060"/><rect x="1" y="2" width="3" height="1" fill="#606060"/><rect x="0" y="3" width="3" height="1" fill="#606060"/><rect x="1" y="4" width="3" height="1" fill="#606060"/><rect x="2" y="5" width="3" height="1" fill="#606060"/><rect x="3" y="6" width="3" height="1" fill="#606060"/></svg>
<svg class="a" style="left:626px;top:181px" width="6" height="7" shape-rendering="crispEdges"><rect x="0" y="0" width="3" height="1" fill="#606060"/><rect x="1" y="1" width="3" height="1" fill="#606060"/><rect x="2" y="2" width="3" height="1" fill="#606060"/><rect x="3" y="3" width="3" height="1" fill="#606060"/><rect x="2" y="4" width="3" height="1" fill="#606060"/><rect x="1" y="5" width="3" height="1" fill="#606060"/><rect x="0" y="6" width="3" height="1" fill="#606060"/></svg>
<div class="a" style="left:1px;top:83px;width:1px;height:353px;background:#a0a0a0;"></div>
<div class="a" style="left:2px;top:84px;width:1px;height:351px;background:#696969;"></div>
<div class="a" style="left:4px;top:195px;width:633px;height:1px;background:#fff;"></div>
<div class="a" style="left:4px;top:196px;width:633px;height:3px;background:#f0f0f0;"></div>
<div class="a" style="left:2px;top:199px;width:636px;height:1px;background:#a0a0a0;"></div>
<div class="a" style="left:2px;top:200px;width:636px;height:1px;background:#696969;"></div>
<div class="a" style="left:1px;top:435px;width:638px;height:1px;background:#ffffff;"></div>
<div class="a" style="left:638px;top:83px;width:1px;height:353px;background:#ffffff;"></div>
<div class="a" style="left:2px;top:434px;width:636px;height:1px;background:#e3e3e3;"></div>
<div class="a" style="left:637px;top:84px;width:1px;height:351px;background:#e3e3e3;"></div>
<div class="a" style="left:3px;top:201px;width:634px;height:1px;background:#fafafa;"></div>
<div class="a" style="left:3px;top:201px;width:1px;height:233px;background:#fff;"></div>
<div class="a" style="left:4px;top:206px;width:100px;height:1px;background:#fff;"></div>
<div class="a" style="left:103px;top:206px;width:1px;height:99px;background:#fff;"></div>
<div class="a" style="left:4px;top:304px;width:102px;height:1px;background:#a0a0a0;"></div>
<div class="a" style="left:106px;top:206px;width:1px;height:100px;background:#a0a0a0;"></div>
<div class="a" style="left:107px;top:207px;width:530px;height:1px;background:#fff;"></div>
<div class="a" style="left:103px;top:303px;width:534px;height:1px;background:#a0a0a0;"></div>
<div class="a" style="left:4px;top:305px;width:633px;height:1px;background:#fff;"></div>
<div class="a" style="left:106px;top:306px;width:1px;height:1px;background:#fff;"></div>
<svg class="a" style="left:14px;top:215px" width="14" height="8" shape-rendering="crispEdges"><rect x="1" y="0" width="12" height="1" fill="#dadde1"/><rect x="1" y="1" width="12" height="1" fill="#cfd3d8"/><rect x="0" y="2" width="14" height="1" fill="#e2e4e7"/><rect x="0" y="3" width="14" height="1" fill="#e9e9e9"/><rect x="0" y="4" width="1" height="1" fill="#e9e9e9"/><rect x="1" y="4" width="9" height="1" fill="#2a2a2a"/><rect x="10" y="4" width="1" height="1" fill="#3fd23f"/><rect x="11" y="4" width="2" height="1" fill="#2a2a2a"/><rect x="13" y="4" width="1" height="1" fill="#e9e9e9"/><rect x="0" y="5" width="1" height="1" fill="#e9e9e9"/><rect x="1" y="5" width="8" height="1" fill="#3a3a3a"/><rect x="9" y="5" width="3" height="1" fill="#5ff05f"/><rect x="12" y="5" width="1" height="1" fill="#2a2a2a"/><rect x="13" y="5" width="1" height="1" fill="#e9e9e9"/><rect x="0" y="6" width="1" height="1" fill="#e9e9e9"/><rect x="1" y="6" width="9" height="1" fill="#2a2a2a"/><rect x="10" y="6" width="1" height="1" fill="#3fd23f"/><rect x="11" y="6" width="2" height="1" fill="#2a2a2a"/><rect x="13" y="6" width="1" height="1" fill="#e9e9e9"/><rect x="0" y="7" width="14" height="1" fill="#d6d6d6"/></svg>
<div id="x29" class="t b" style="left:30.5px;top:216px;letter-spacing:-0.600px;">Disk 0</div>
<div id="x30" class="t" style="left:12.5px;top:231px;letter-spacing:-0.800px;">Basic</div>
<div id="x31" class="t" style="left:12.5px;top:246px;letter-spacing:-1.059px;">60.00 GB</div>
<div id="x32" class="t" style="left:12.5px;top:261px;letter-spacing:-0.120px;">Online</div>
<div class="a" style="left:107px;top:211px;width:189px;height:88px;background:#fff;"></div>
<div class="a" style="left:108px;top:212px;width:187px;height:13px;background:#000080;"></div>
<div class="a" style="left:107px;top:225px;width:189px;height:1px;background:#dcdcd4;"></div>
<div class="a" style="left:108px;top:227px;width:187px;height:71px;background:#f0f0f0;"></div>
<div class="a" style="left:107px;top:300px;width:190px;height:1px;background:#f8f8f8;"></div>
<div class="a" style="left:106px;top:299px;width:191px;height:1px;background:#a0a0a0;"></div>
<div class="a" style="left:296px;top:211px;width:1px;height:89px;background:#a0a0a0;"></div>
<div class="a" style="left:111px;top:228px;width:182px;height:1px;background:#a0a0a0;"></div>
<div class="a" style="left:111px;top:228px;width:1px;height:67px;background:#a0a0a0;"></div>
<div class="a" style="left:112px;top:229px;width:181px;height:67px;background:#fff;"></div>
<div id="x33" class="t b" style="left:115.1px;top:233px;letter-spacing:-0.343px;">System Reserved</div>
<div id="x34" class="t" style="left:115.1px;top:248px;letter-spacing:-0.860px;">500 MB NTFS</div>
<div id="x35" class="t" style="left:115.1px;top:263px;letter-spacing:-0.198px;">Healthy (System, Active, Primary</div>
<div class="a" style="left:297px;top:211px;width:337px;height:14px;background:#fff;"></div>
<div class="a" style="left:298px;top:212px;width:335px;height:13px;background:#000080;"></div>
<div class="a" style="left:297px;top:225px;width:337px;height:74px;background:#c3c3c3;"></div>
<div class="a" style="left:633px;top:211px;width:1px;height:14px;background:#a0a0a0;"></div>
<div class="a" style="left:634px;top:211px;width:1px;height:89px;background:#fff;"></div>
<div class="a" style="left:297px;top:299px;width:338px;height:1px;background:#fff;"></div>
<div class="a" style="left:297px;top:300px;width:338px;height:1px;background:#f8f8f8;"></div>
<div class="a" style="left:301px;top:228px;width:330px;height:68px;background:#a8a8a8;"></div>
<svg class="a" style="left:302px;top:229px" width="328" height="66" shape-rendering="crispEdges"><defs><pattern id="hat" width="8" height="8" patternUnits="userSpaceOnUse" x="1" y="0">
<rect width="8" height="8" fill="#fff"/>
<rect x="7" y="0" width="1" height="1" fill="#999"/><rect x="6" y="1" width="1" height="1" fill="#999"/><rect x="5" y="2" width="1" height="1" fill="#999"/><rect x="4" y="3" width="1" height="1" fill="#999"/>
<rect x="3" y="4" width="1" height="1" fill="#999"/><rect x="2" y="5" width="1" height="1" fill="#999"/><rect x="1" y="6" width="1" height="1" fill="#999"/><rect x="0" y="7" width="1" height="1" fill="#999"/>
</pattern></defs><rect width="328" height="66" fill="url(#hat)"/></svg>
<div class="a" style="left:305px;top:231px;width:28px;height:15px;background:#fff;"></div>
<div class="a" style="left:305px;top:246px;width:77px;height:14px;background:#fff;"></div>
<div class="a" style="left:305px;top:260px;width:296px;height:15px;background:#fff;"></div>
<div id="x36" class="t b" style="left:311.9px;top:233px;letter-spacing:-1.266px;">(C:)</div>
<div id="x37" class="t" style="left:305.5px;top:248px;letter-spacing:-1.000px;">59.51 GB NTFS</div>
<div id="x38" class="t" style="left:305.6px;top:263px;letter-spacing:-0.272px;">Healthy (Boot, Page File, Crash Dump, Primary Partition)</div>
<div class="a" style="left:103px;top:305px;width:1px;height:87px;background:#fff;"></div>
<div class="a" style="left:4px;top:391px;width:102px;height:1px;background:#a0a0a0;"></div>
<div class="a" style="left:106px;top:307px;width:1px;height:85px;background:#a0a0a0;"></div>
<div class="a" style="left:106px;top:390px;width:531px;height:1px;background:#a0a0a0;"></div>
<svg class="a" style="left:14px;top:310px" width="15" height="15" shape-rendering="crispEdges"><rect x="10" y="0" width="1" height="1" fill="#a4a4a4"/><rect x="7" y="1" width="3" height="1" fill="#a4a4a4"/><rect x="10" y="1" width="1" height="1" fill="#cacaca"/><rect x="11" y="1" width="3" height="1" fill="#a4a4a4"/><rect x="6" y="2" width="2" height="1" fill="#a4a4a4"/><rect x="8" y="2" width="5" height="1" fill="#cacaca"/><rect x="13" y="2" width="2" height="1" fill="#a4a4a4"/><rect x="6" y="3" width="1" height="1" fill="#a4a4a4"/><rect x="7" y="3" width="2" height="1" fill="#cacaca"/><rect x="9" y="3" width="3" height="1" fill="#8c8c8c"/><rect x="12" y="3" width="2" height="1" fill="#cacaca"/><rect x="14" y="3" width="1" height="1" fill="#a4a4a4"/><rect x="6" y="4" width="1" height="1" fill="#a4a4a4"/><rect x="7" y="4" width="2" height="1" fill="#cacaca"/><rect x="9" y="4" width="1" height="1" fill="#8c8c8c"/><rect x="10" y="4" width="1" height="1" fill="#ffffff"/><rect x="11" y="4" width="1" height="1" fill="#8c8c8c"/><rect x="12" y="4" width="2" height="1" fill="#cacaca"/><rect x="14" y="4" width="1" height="1" fill="#a4a4a4"/><rect x="6" y="5" width="1" height="1" fill="#a4a4a4"/><rect x="7" y="5" width="1" height="1" fill="#cacaca"/><rect x="8" y="5" width="1" height="1" fill="#8c8c8c"/><rect x="9" y="5" width="3" height="1" fill="#ffffff"/><rect x="12" y="5" width="1" height="1" fill="#8c8c8c"/><rect x="13" y="5" width="1" height="1" fill="#cacaca"/><rect x="14" y="5" width="1" height="1" fill="#a4a4a4"/><rect x="6" y="6" width="1" height="1" fill="#a4a4a4"/><rect x="7" y="6" width="2" height="1" fill="#cacaca"/><rect x="9" y="6" width="3" height="1" fill="#8c8c8c"/><rect x="12" y="6" width="2" height="1" fill="#cacaca"/><rect x="14" y="6" width="1" height="1" fill="#a4a4a4"/><rect x="1" y="7" width="5" height="1" fill="#dadde1"/><rect x="6" y="7" width="1" height="1" fill="#a4a4a4"/><rect x="7" y="7" width="7" height="1" fill="#cacaca"/><rect x="14" y="7" width="1" height="1" fill="#a4a4a4"/><rect x="1" y="8" width="6" height="1" fill="#cfd3d8"/><rect x="7" y="8" width="1" height="1" fill="#a4a4a4"/><rect x="8" y="8" width="5" height="1" fill="#cacaca"/><rect x="13" y="8" width="1" height="1" fill="#a4a4a4"/><rect x="0" y="9" width="8" height="1" fill="#e2e4e7"/><rect x="8" y="9" width="5" height="1" fill="#a4a4a4"/><rect x="13" y="9" width="1" height="1" fill="#e2e4e7"/><rect x="0" y="10" width="14" height="1" fill="#e9e9e9"/><rect x="0" y="11" width="1" height="1" fill="#e9e9e9"/><rect x="1" y="11" width="9" height="1" fill="#2a2a2a"/><rect x="10" y="11" width="1" height="1" fill="#3fd23f"/><rect x="11" y="11" width="2" height="1" fill="#2a2a2a"/><rect x="13" y="11" width="1" height="1" fill="#e9e9e9"/><rect x="0" y="12" width="1" height="1" fill="#e9e9e9"/><rect x="1" y="12" width="8" height="1" fill="#3a3a3a"/><rect x="9" y="12" width="3" height="1" fill="#5ff05f"/><rect x="12" y="12" width="1" height="1" fill="#2a2a2a"/><rect x="13" y="12" width="1" height="1" fill="#e9e9e9"/><rect x="0" y="13" width="1" height="1" fill="#e9e9e9"/><rect x="1" y="13" width="9" height="1" fill="#2a2a2a"/><rect x="10" y="13" width="1" height="1" fill="#3fd23f"/><rect x="11" y="13" width="2" height="1" fill="#2a2a2a"/><rect x="13" y="13" width="1" height="1" fill="#e9e9e9"/><rect x="0" y="14" width="14" height="1" fill="#d6d6d6"/></svg>
<div id="x39" class="t b" style="left:30.0px;top:315px;letter-spacing:-0.216px;">CD-ROM 0</div>
<div id="x40" class="t" style="left:12.5px;top:330px;letter-spacing:-0.772px;">DVD (D:)</div>
<div id="x41" class="t" style="left:12.5px;top:360px;letter-spacing:-0.315px;">No Media</div>
<div class="a" style="left:3px;top:414px;width:634px;height:1px;background:#fff;"></div>
<div class="a" style="left:636px;top:414px;width:1px;height:20px;background:#a0a0a0;"></div>
<div class="a" style="left:3px;top:433px;width:634px;height:1px;background:#a0a0a0;"></div>
<div class="a" style="left:8px;top:416px;width:12px;height:15px;background:#fff;"></div>
<div class="a" style="left:9px;top:417px;width:10px;height:13px;background:#000;"></div>
<div id="x42" class="t" style="left:23.799999999999997px;top:418px;letter-spacing:-0.100px;">Unallocated</div>
<div class="a" style="left:91px;top:416px;width:12px;height:15px;background:#fff;"></div>
<div class="a" style="left:92px;top:417px;width:10px;height:13px;background:#000080;"></div>
<div id="x43" class="t" style="left:107.80000000000001px;top:418px;letter-spacing:0.006px;">Primary partition</div>
<div class="a" style="left:1px;top:436px;width:638px;height:23px;background:#f0f0f0;"></div>
<div class="a" style="left:418px;top:438px;width:1px;height:20px;background:#d7d7d7;"></div>
<div class="a" style="left:551px;top:438px;width:1px;height:20px;background:#d7d7d7;"></div>
<div class="a" style="left:636px;top:438px;width:1px;height:20px;background:#d7d7d7;"></div>
</body></html>
